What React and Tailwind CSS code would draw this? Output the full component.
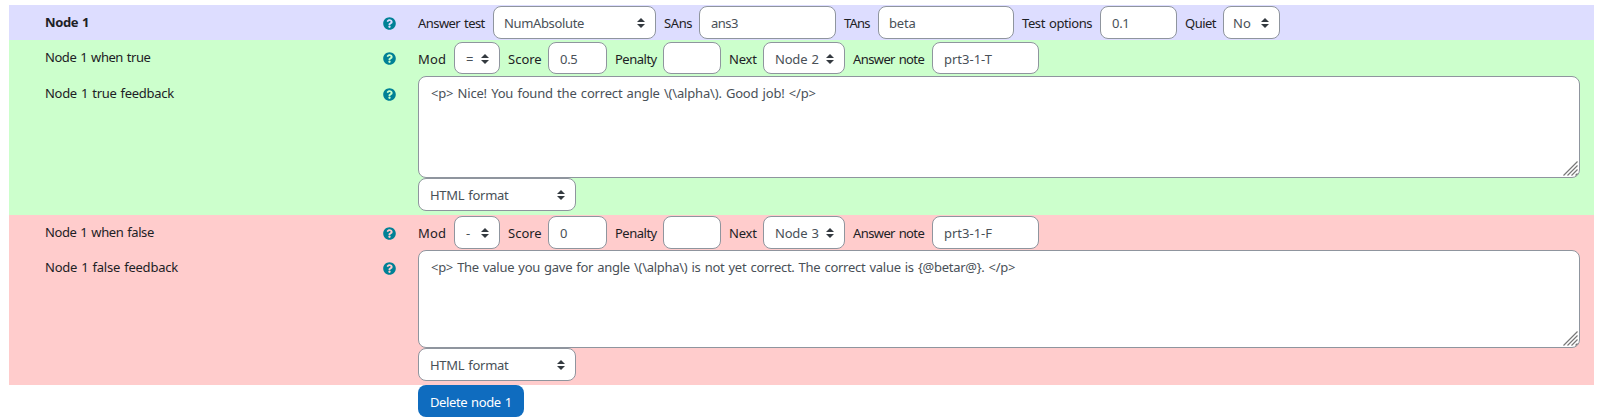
import React from "react";
import { FaQuestionCircle } from "react-icons/fa";

const box = "flex shrink-0 items-center rounded-lg border border-[#8f959e] bg-white text-[#495057] whitespace-nowrap";

function Sort() {
  return (
    <svg viewBox="0 0 4 5" className="h-[10px] w-2 shrink-0" fill="#343a40">
      <path d="M2 0L0 2h4zm0 5L0 3h4z" />
    </svg>
  );
}

function Label({ w, children }) {
  return <span className={`shrink-0 whitespace-nowrap text-[#1d2125] ${w}`}>{children}</span>;
}

function Input({ w, h, pad = "px-[11px]", children }) {
  return <div className={`${box} mr-2 ${pad} ${w} ${h}`}>{children}</div>;
}

function Select({ w, h, pad = "pl-[11px]", children }) {
  return (
    <div className={`${box} mr-2 justify-between pr-[10px] ${pad} ${w} ${h}`}>
      <span>{children}</span>
      <Sort />
    </div>
  );
}

function Caption({ children, className = "", text = "" }) {
  return (
    <div className={`flex h-5 w-[409px] shrink-0 items-center justify-between pl-9 pr-[22px] text-[#1d2125] ${className}`}>
      <span className={`mb-[2px] whitespace-nowrap ${text}`}>{children}</span>
      <FaQuestionCircle className="mt-px size-[13px] text-[#008196]" />
    </div>
  );
}

function Feedback({ h, children }) {
  return (
    <div className={`relative w-[1162px] rounded-lg border border-[#8f959e] bg-white px-3 pt-[6px] leading-5 text-[#495057] ${h}`}>
      {children}
      <svg viewBox="0 0 15 15" className="absolute bottom-px right-px size-[15px]" stroke="#777" strokeWidth="1.2">
        <path d="M0.5 14.5L14.5 0.5M4.5 14.5L14.5 4.5M8.5 14.5L14.5 8.5M12.5 14.5L14.5 12.5" />
      </svg>
    </div>
  );
}

function Branch({ h, pad, mod, score, next, note }) {
  return (
    <div className="flex items-center">
      <Label w={`w-9 tracking-[0.2px] ${pad}`}>Mod</Label>
      <Select w="w-[46px]" h={`${h} ${pad}`}>{mod}</Select>
      <Label w={`w-10 ${pad}`}>Score</Label>
      <Input w="w-[59px] tracking-[-0.3px]" h={`${h} ${pad}`}>{score}</Input>
      <Label w={`w-12 tracking-[-0.5px] ${pad}`}>Penalty</Label>
      <Input w="w-[58px]" h={h} />
      <Label w={`w-[34px] tracking-[-0.2px] ${pad}`}>Next</Label>
      <Select w="w-[82px] tracking-[-0.2px]" h={`${h} ${pad}`}>{next}</Select>
      <Label w={`w-[79px] tracking-[-0.6px] ${pad}`}>Answer note</Label>
      <Input w="w-[107px]" h={`${h} ${pad}`}>{note}</Input>
    </div>
  );
}

export default function App() {
  return (
    <div className="h-[420px] w-[1597px] overflow-hidden bg-white pl-[9px] pt-[5px] font-['Noto_Sans',sans-serif] text-[13px] leading-5 [word-spacing:1px]">
      <div className="w-[1585px]">
        <section className="flex h-[35px] bg-[#ddddff] pt-px">
          <Caption className="mt-[7px] font-bold" text="tracking-[-0.4px]">Node 1</Caption>
          <div className="flex h-[33px] items-center">
            <Label w="w-[75px] tracking-[-0.55px]">Answer test</Label>
            <Select w="w-[163px] tracking-[-0.35px]" pad="pl-[10px]" h="h-[33px]">NumAbsolute</Select>
            <Label w="w-[35px] tracking-[-0.4px]">SAns</Label>
            <Input w="w-[137px] tracking-[-0.5px]" h="h-[33px]">ans3</Input>
            <Label w="w-[34px] tracking-[-0.8px]">TAns</Label>
            <Input w="w-[136px] tracking-[-0.2px]" pad="px-[10px]" h="h-[33px]">beta</Input>
            <Label w="w-[78px] tracking-[-0.4px]">Test options</Label>
            <Input w="w-[77px] tracking-[-0.3px]" h="h-[33px]">0.1</Input>
            <Label w="w-[38px] tracking-[-0.5px]">Quiet</Label>
            <Select w="w-[57px] tracking-[0.2px]" pad="pl-[9px]" h="h-[33px]">No</Select>
          </div>
        </section>
        <section className="h-[175px] bg-[#ccffcc] pt-[2px]">
          <div className="flex h-[34px]">
            <Caption className="mt-[6px]" text="tracking-[-0.45px]">Node 1 when true</Caption>
            <div className="h-8"><Branch h="h-8" pad="pt-px" mod="=" score="0.5" next="Node 2" note="prt3-1-T" /></div>
          </div>
          <div className="flex">
            <Caption className="mt-[8px]" text="tracking-[-0.29px]">Node 1 true feedback</Caption>
            <div>
              <Feedback h="h-[102px] tracking-[-0.18px]">{"<p> Nice! You found the correct angle \\(\\alpha\\). Good job! </p>"}</Feedback>
              <Select w="w-[158px] tracking-[-0.3px]" h="h-[33px]">HTML format</Select>
            </div>
          </div>
        </section>
        <section className="h-[170px] bg-[#ffcccc] pt-px">
          <div className="flex h-[34px]">
            <Caption className="mt-[7px]" text="tracking-[-0.42px]">Node 1 when false</Caption>
            <div className="h-[33px]"><Branch h="h-[33px]" pad="pt-0" mod="-" score="0" next="Node 3" note="prt3-1-F" /></div>
          </div>
          <div className="flex">
            <Caption className="mt-[8px]" text="tracking-[-0.24px]">Node 1 false feedback</Caption>
            <div>
              <Feedback h="h-[98px] tracking-[-0.28px]">{"<p> The value you gave for angle \\(\\alpha\\) is not yet correct. The correct value is {@betar@}. </p>"}</Feedback>
              <Select w="w-[158px] tracking-[-0.3px]" h="h-[33px]">HTML format</Select>
            </div>
          </div>
        </section>
        <button className="ml-[409px] flex h-8 w-[106px] items-center rounded-lg bg-[#0f6cbf] pl-3 pt-[2px] tracking-[-0.4px] whitespace-nowrap text-white [word-spacing:1px]">Delete node 1</button>
      </div>
    </div>
  );
}
